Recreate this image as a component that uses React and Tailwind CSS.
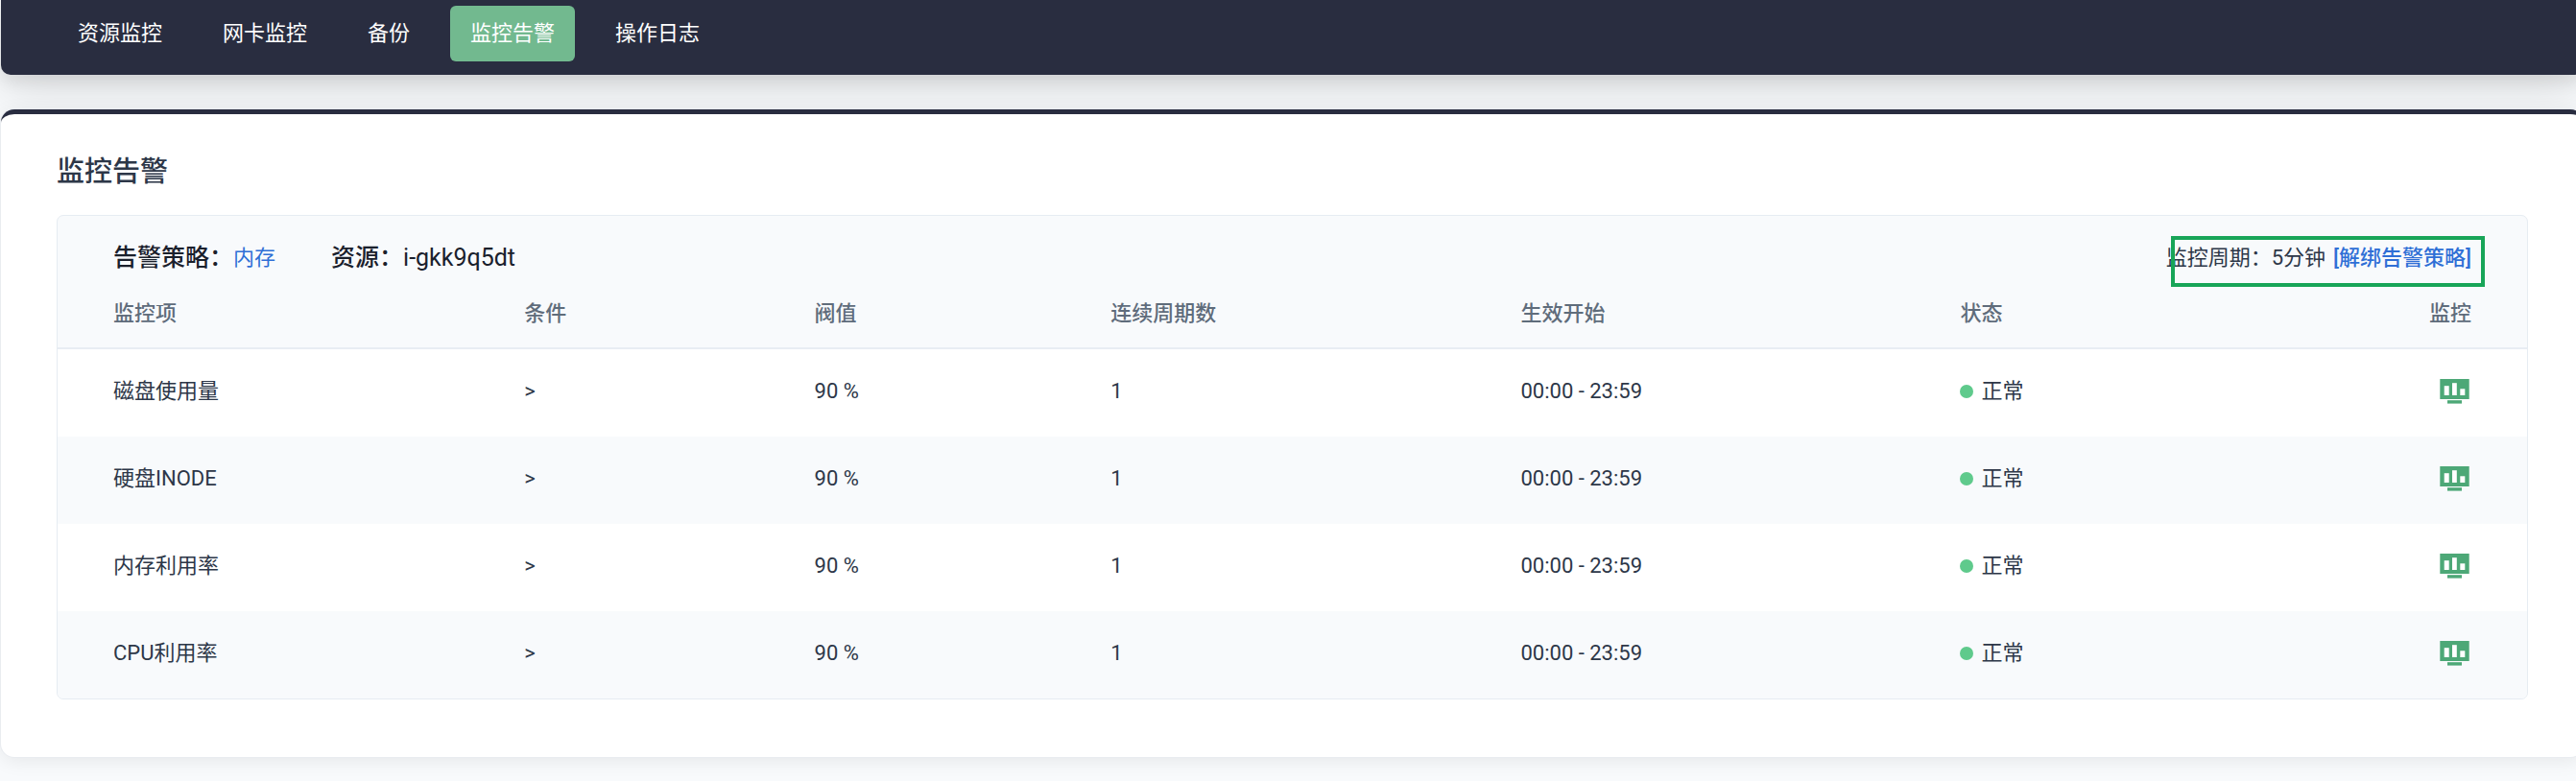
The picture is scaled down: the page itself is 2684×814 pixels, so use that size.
const tabs = ["资源监控", "网卡监控", "备份", "监控告警", "操作日志"];

const columns = [
  { label: "监控项", cls: "w-[18.9%] pl-[58px] text-left" },
  { label: "条件", cls: "w-[11.75%] text-left" },
  { label: "阀值", cls: "w-[12%] text-left" },
  { label: "连续周期数", cls: "w-[16.6%] text-left" },
  { label: "生效开始", cls: "w-[17.8%] text-left" },
  { label: "状态", cls: "text-left" },
  { label: "监控", cls: "pr-[58px] text-right" },
];

const rows = ["磁盘使用量", "硬盘INODE", "内存利用率", "CPU利用率"];

function MonitorIcon() {
  return (
    <svg viewBox="0 0 31 26" className="h-[26px] w-[31px]" fill="none" aria-hidden="true">
      <rect x="0.3" width="30.4" height="21" fill="#4da877" />
      <rect x="4.7" y="7.2" width="5" height="9.8" fill="#fff" />
      <rect x="13" y="4.2" width="4.8" height="12.8" fill="#fff" />
      <rect x="21.3" y="10.3" width="5" height="6.7" fill="#fff" />
      <rect x="8" y="22.2" width="15" height="3.4" fill="#4da877" />
    </svg>
  );
}

export default function App() {
  return (
    <div className="min-h-screen overflow-hidden bg-[#f8fafc] pl-px font-['Roboto','Noto_Sans_CJK_SC',sans-serif] text-[22px] leading-8 text-[#2d3748]">
      <nav className="-mr-2 flex h-[78px] items-start gap-[21px] rounded-b-[10px] bg-[#292d40] pt-1.5 pl-[59px] text-white shadow-[0_20px_50px_rgba(0,0,0,0.11),0_8px_16px_rgba(0,0,0,0.08)]">
        {tabs.map((t) => (
          <a
            key={t}
            href="#"
            aria-current={t === "监控告警" ? "page" : undefined}
            className={
              "flex h-[58px] items-center rounded-md px-[21px] " +
              (t === "监控告警" ? "bg-[#72b98f]" : "")
            }
          >
            {t}
          </a>
        ))}
      </nav>

      <main className="relative mt-9 -mr-2 rounded-[14px] border-t-[5px] border-[#292d40] bg-white px-[58px] pt-[38px] pb-[60px] shadow-[0_0_0_1px_#e9ecf0,0_4px_20px_rgba(0,0,0,0.08)]">
        <h1 className="text-[29px] leading-[44px] font-medium">监控告警</h1>

        <section className="relative mt-[23px] overflow-hidden rounded-[7px] border border-[#e6ecf2] bg-[#f8fafc]">
          <div className="flex items-center justify-between px-[58px] pt-6">
            <div className="flex items-center text-[25px] leading-10 text-[#1a202c]">
              <span className="font-medium">告警策略：</span>
              <a href="#" className="text-[22px] text-[#2f6fd6]">内存</a>
              <span className="ml-[58px]">
                <span className="font-medium">资源：</span>i-gkk9q5dt
              </span>
            </div>
            <div className="flex items-center gap-2">
              <span>监控周期：5分钟</span>
              <button type="button" className="font-medium text-[#2f6fd6]">[解绑告警策略]</button>
            </div>
          </div>
          <div className="pointer-events-none absolute top-[21px] right-[44px] h-[53px] w-[327px] border-4 border-[#18a558]" />

          <table className="w-full table-fixed border-separate border-spacing-0">
            <thead>
              <tr className="h-[75px] text-[#5f6c7b]">
                {columns.map((c) => (
                  <th key={c.label} scope="col" className={c.cls + " border-b-2 border-[#e8edf3] pt-0.5 font-medium"}>
                    {c.label}
                  </th>
                ))}
              </tr>
            </thead>
            <tbody>
              {rows.map((name) => (
                <tr key={name} className="h-[91px] odd:bg-white even:bg-[#f8fafc] *:pb-1">
                  <td className="pl-[58px]">{name}</td>
                  <td>&gt;</td>
                  <td>90 %</td>
                  <td>1</td>
                  <td>00:00 - 23:59</td>
                  <td>
                    <span className="flex items-center gap-2">
                      <span className="size-[14px] rounded-full bg-[#5fca8c]" />
                      正常
                    </span>
                  </td>
                  <td className="pr-[60px]">
                    <a href="#" aria-label={name} className="flex justify-end">
                      <MonitorIcon />
                    </a>
                  </td>
                </tr>
              ))}
            </tbody>
          </table>
        </section>
      </main>
    </div>
  );
}
